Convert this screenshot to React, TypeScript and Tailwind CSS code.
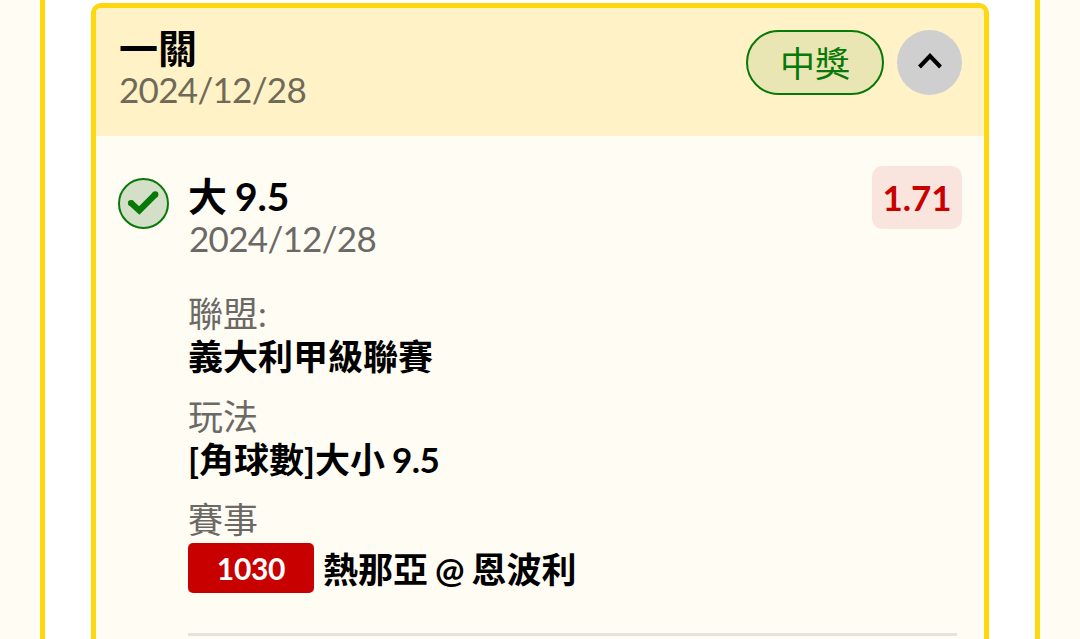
import React from "react";

interface DetailRowProps {
    label: string;
    children: React.ReactNode;
}

const DetailRow: React.FC<DetailRowProps> = ({ label, children }) => (
    <div className="flex flex-col">
        <span className="h-[42px] leading-[42px] text-[#6b6965]">{label}</span>
        <div className="flex items-center min-h-[44px] leading-[42px] pb-px font-bold text-black">{children}</div>
    </div>
);

const CheckBadge: React.FC = () => (
    <div className="flex items-center justify-center w-[51px] h-[51px] shrink-0 rounded-full border-2 border-[#087808] bg-[#d3e0c7]">
        <svg width="33" height="26" viewBox="0 0 33 26" fill="none">
            <path d="M3.5 11.5 L12.3 19.5 L28.7 3" stroke="#087808" strokeWidth="6.2" />
            <circle cx="4" cy="12" r="3.1" fill="#087808" />
            <circle cx="28.3" cy="3.4" r="3.1" fill="#087808" />
        </svg>
    </div>
);

const CardHeader: React.FC = () => (
    <div className="flex justify-between items-start h-[128px] pl-[23px] pr-[22px] pt-[22px] bg-[#fff2c6]">
        <div className="flex flex-col -mt-[2px]">
            <h2 className="h-[40px] leading-[40px] text-[39px] font-bold text-black">一關</h2>
            <span className="h-[42px] leading-[42px] tracking-[-0.7px] text-[#6f6a58]">2024/12/28</span>
        </div>
        <div className="flex items-center gap-[13px]">
            <span className="flex items-center justify-center w-[138px] h-[65px] pt-[2px] rounded-full border-2 border-[#087808] bg-[#e9e6b3] text-[#087808]">
                中獎
            </span>
            <button className="flex items-center justify-center w-[65px] h-[65px] rounded-full bg-[#cfcfcf]">
                <svg className="mb-1" width="24" height="16" viewBox="0 0 24 16" fill="none">
                    <path d="M1.5 14 L12 3 L22.5 14" stroke="#000" strokeWidth="4" />
                </svg>
            </button>
        </div>
    </div>
);

export default function App() {
    return (
        <div className="h-[639px] overflow-hidden bg-[#fffcf4] px-10 font-['Lato','Noto_Sans_CJK_TC',sans-serif] text-[35px] [word-spacing:-1.5px]">
            <div className="h-full border-x-[5px] border-[#fed70f] bg-white pt-[3px] pl-[46px] pr-[46px]">
                <div className="h-[700px] rounded-[10px] border-[5px] border-[#fed70f] bg-[#fffcf4] overflow-hidden">
                    <CardHeader />

                    <div className="flex items-start pl-[22px] pr-[22px] pt-[30px]">
                        <div className="pt-3">
                            <CheckBadge />
                        </div>
                        <div className="flex flex-col grow pl-[19px]">
                            {/* Selection and odds */}
                            <div className="flex justify-between">
                                <div className="flex flex-col pt-[9px]">
                                    <h3 className="h-[42px] leading-[42px] text-[39px] font-bold text-black">大 9.5</h3>
                                    <span className="h-[43px] leading-[42px] pl-px tracking-[-0.7px] text-[#6b6965]">2024/12/28</span>
                                </div>
                                <span className="flex items-center justify-center w-[90px] h-[63px] rounded-[10px] bg-[#fae5de] font-bold text-[#c80000]">
                                    1.71
                                </span>
                            </div>

                            {/* Match details */}
                            <div className="flex flex-col gap-[17px] pt-[32px]">
                                <DetailRow label="聯盟:">義大利甲級聯賽</DetailRow>
                                <DetailRow label="玩法">
                                    <span>
                                        [角球數]大小 <span className="tracking-[-0.5px]">9.5</span>
                                    </span>
                                </DetailRow>
                                <DetailRow label="賽事">
                                    <span className="flex items-center justify-center w-[126px] h-[50px] mt-[3px] mb-px mr-[9px] rounded-[5px] bg-[#c80000] text-[30px] tracking-[-0.3px] text-white">
                                        1030
                                    </span>
                                    <span className="pt-[4px]">熱那亞 @ 恩波利</span>
                                </DetailRow>
                            </div>

                            <div className="mt-[38px] mr-[5px] h-[3px] bg-[#e6e3dc]" />
                        </div>
                    </div>
                </div>
            </div>
        </div>
    );
}
